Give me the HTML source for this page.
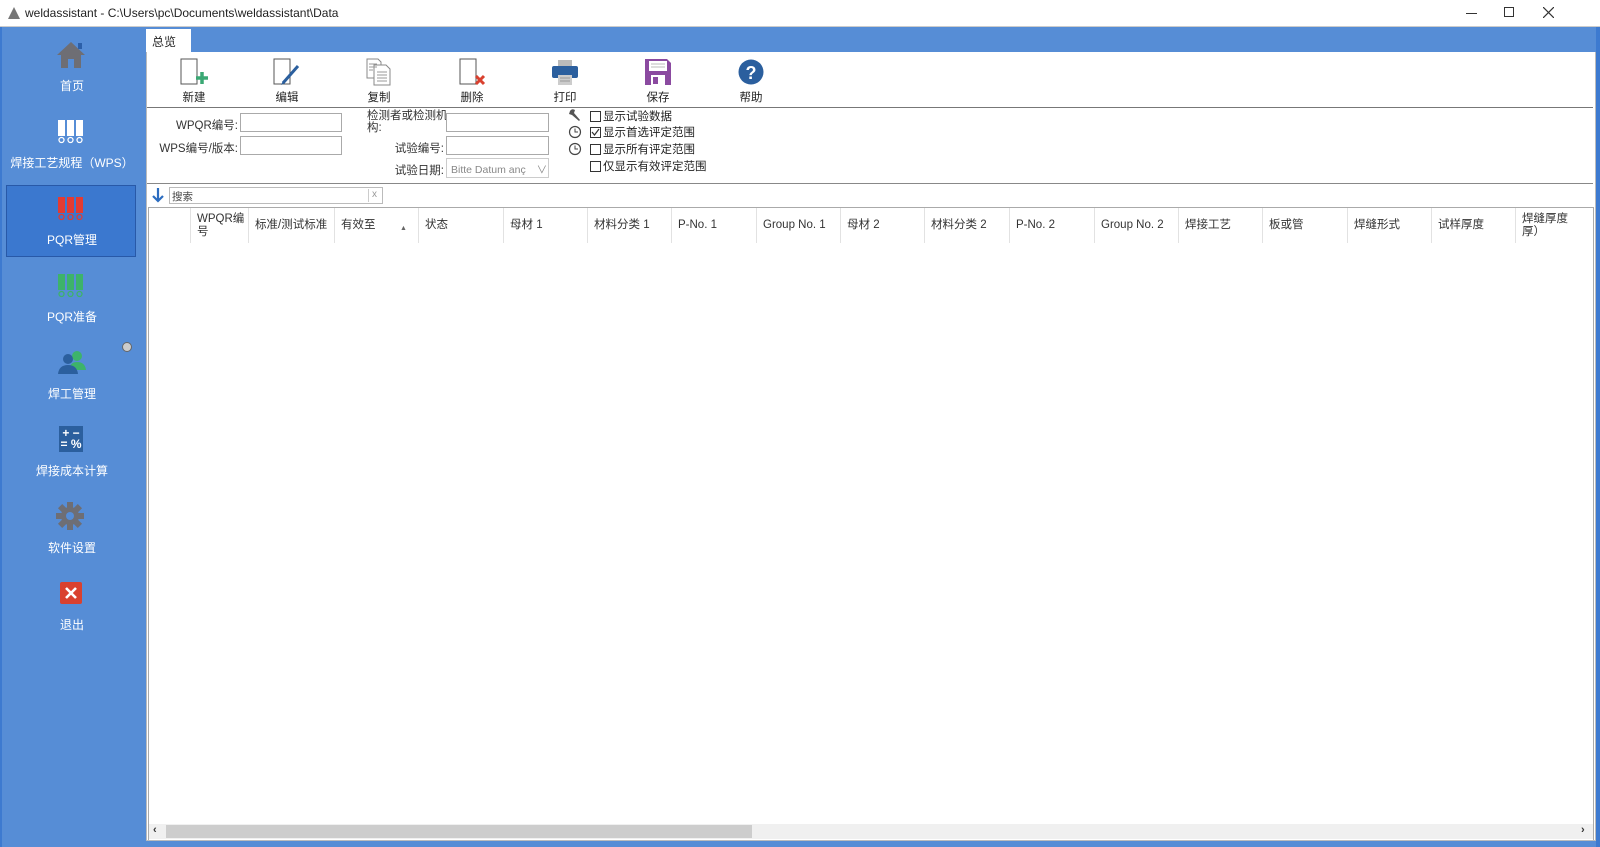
<!DOCTYPE html>
<html><head><meta charset="utf-8">
<style>
*{margin:0;padding:0;box-sizing:border-box}
body{width:1600px;height:847px;overflow:hidden;background:#568dd6;font-family:"Liberation Sans","Noto Sans CJK SC",sans-serif;font-size:12px;color:#222;position:relative}
.a{position:absolute}
#title{left:0;top:0;width:1600px;height:27px;background:#fff;border-bottom:1px solid #ccc}
#title .t{left:25px;top:6px;font-size:12px;color:#222}
.side{color:#fff;font-size:12px;text-align:center;width:144px;left:0}
.inp{background:#fff;border:1px solid #aaa;height:19px}
.lbl{font-size:11.5px;color:#333;text-align:right}
.tb{font-size:11.5px;color:#222;text-align:center;width:60px}
.cb{width:11px;height:11px;border:1px solid #333;background:#fff}
.th{top:208px;height:35px;border-left:1px solid #e2e2e2;font-size:11.5px;color:#333;padding:5px 0 0 6px;line-height:13px}
</style></head><body>
<div id="title" class="a">
 <svg class="a" style="left:8px;top:7px" width="12" height="12"><polygon points="6,0 12,12 0,12" fill="#777"/></svg>
 <div class="a t">weldassistant - C:\Users\pc\Documents\weldassistant\Data</div>
 <div class="a" style="left:1466px;top:13px;width:11px;height:1px;background:#333"></div>
 <div class="a" style="left:1504px;top:7px;width:10px;height:10px;border:1px solid #333"></div>
 <svg class="a" style="left:1543px;top:7px" width="11" height="11"><path d="M0 0L11 11M11 0L0 11" stroke="#333" stroke-width="1.2"/></svg>
</div>
<div class="a" style="left:0;top:27px;width:2px;height:820px;background:#3d7ad0"></div>
<div class="a" style="left:1596px;top:27px;width:4px;height:820px;background:#3d7ad0"></div>

<!-- sidebar -->
<svg class="a" style="left:56px;top:40px" width="30" height="30"><polygon points="15,2 29,15 25,15 25,28 18,28 18,19 12,19 12,28 5,28 5,15 1,15" fill="#6e6e74"/><rect x="22" y="3" width="4" height="6" fill="#2c5fa8"/></svg>
<div class="a side" style="top:77px">首页</div>
<svg class="a" style="left:57px;top:120px" width="28" height="24"><g fill="#fff"><rect x="1" y="0" width="7" height="16"/><rect x="10" y="0" width="7" height="16"/><rect x="19" y="0" width="7" height="16"/></g><g fill="none" stroke="#fff" stroke-width="1.3"><circle cx="4.5" cy="20" r="2.5"/><circle cx="13.5" cy="20" r="2.5"/><circle cx="22.5" cy="20" r="2.5"/></g></svg>
<div class="a side" style="top:154px">焊接工艺规程（WPS）</div>
<div class="a" style="left:6px;top:185px;width:130px;height:72px;background:#3b78cf;border:1px solid #2859a8"></div>
<svg class="a" style="left:57px;top:197px" width="28" height="24"><g fill="#e23b33"><rect x="1" y="0" width="7" height="16"/><rect x="10" y="0" width="7" height="16"/><rect x="19" y="0" width="7" height="16"/></g><g fill="none" stroke="#e23b33" stroke-width="1.3"><circle cx="4.5" cy="20" r="2.5"/><circle cx="13.5" cy="20" r="2.5"/><circle cx="22.5" cy="20" r="2.5"/></g></svg>
<div class="a side" style="top:231px">PQR管理</div>
<svg class="a" style="left:57px;top:274px" width="28" height="24"><g fill="#3db36a"><rect x="1" y="0" width="7" height="16"/><rect x="10" y="0" width="7" height="16"/><rect x="19" y="0" width="7" height="16"/></g><g fill="none" stroke="#3db36a" stroke-width="1.3"><circle cx="4.5" cy="20" r="2.5"/><circle cx="13.5" cy="20" r="2.5"/><circle cx="22.5" cy="20" r="2.5"/></g></svg>
<div class="a side" style="top:308px">PQR准备</div>
<div class="a" style="left:122px;top:342px;width:10px;height:10px;border-radius:50%;background:#ccc;border:1px solid #666"></div>
<svg class="a" style="left:57px;top:350px" width="30" height="24"><circle cx="20" cy="6" r="5" fill="#3db36a"/><path d="M12 20 Q13 12 20 12 Q28 12 29 20Z" fill="#3db36a"/><circle cx="11" cy="9" r="5" fill="#2b5f9e"/><path d="M1 24 Q2 15 11 15 Q20 15 21 24Z" fill="#2b5f9e"/></svg>
<div class="a side" style="top:385px">焊工管理</div>
<div class="a" style="left:59px;top:426px;width:24px;height:26px;background:#2b5f9e;color:#fff;font-size:12px;font-weight:bold;line-height:11px;text-align:center;padding-top:2px">+ −<br>= %</div>
<div class="a side" style="top:462px">焊接成本计算</div>
<svg class="a" style="left:56px;top:502px" width="28" height="28" viewBox="0 0 28 28"><g fill="#6e6e74"><circle cx="14" cy="14" r="9"/><g id="t"><rect x="11" y="0" width="6" height="28"/></g><rect x="11" y="0" width="6" height="28" transform="rotate(45 14 14)"/><rect x="11" y="0" width="6" height="28" transform="rotate(90 14 14)"/><rect x="11" y="0" width="6" height="28" transform="rotate(135 14 14)"/></g><circle cx="14" cy="14" r="4" fill="#568dd6"/></svg>
<div class="a side" style="top:539px">软件设置</div>
<div class="a" style="left:60px;top:582px;width:22px;height:22px;background:#d9412f;border-radius:2px"></div>
<svg class="a" style="left:65px;top:587px" width="12" height="12"><path d="M1 1L11 11M11 1L1 11" stroke="#fff" stroke-width="2.6"/></svg>
<div class="a side" style="top:616px">退出</div>

<!-- tab -->
<div class="a" style="left:146px;top:29px;width:45px;height:24px;background:#fff"></div>
<div class="a" style="left:152px;top:33px;font-size:12px">总览</div>
<!-- content -->
<div class="a" style="left:146px;top:52px;width:1450px;height:789px;background:#fff;border:1px solid #bbb;border-top:none"></div>

<!-- toolbar -->
<svg class="a" style="left:180px;top:58px" width="30" height="28"><path d="M1 1H17V26H1Z" fill="#fff" stroke="#555"/><path d="M22 14V26M16 20H28" stroke="#3aa874" stroke-width="3.5"/></svg>
<div class="a tb" style="left:164px;top:89px">新建</div>
<svg class="a" style="left:273px;top:58px" width="30" height="28"><path d="M1 1H17V26H1Z" fill="#fff" stroke="#555"/><path d="M10 25L25 8" stroke="#2b5f9e" stroke-width="3"/><path d="M8 27L10 23L12 25Z" fill="#2b5f9e"/></svg>
<div class="a tb" style="left:257px;top:89px">编辑</div>
<svg class="a" style="left:366px;top:58px" width="26" height="28"><path d="M1 1H12L15 4V20H1Z" fill="#fff" stroke="#888"/><path d="M8 7H20L24 11V27H8Z" fill="#fff" stroke="#888"/><path d="M3 6H11M3 9H11M3 12H7M11 14H21M11 17H21M11 20H21M11 23H21" stroke="#999"/></svg>
<div class="a tb" style="left:349px;top:89px">复制</div>
<svg class="a" style="left:459px;top:58px" width="28" height="28"><path d="M1 1H17V26H1Z" fill="#fff" stroke="#555"/><path d="M17 18L25 26M25 18L17 26" stroke="#d9412f" stroke-width="3"/></svg>
<div class="a tb" style="left:442px;top:89px">删除</div>
<svg class="a" style="left:551px;top:60px" width="28" height="26"><rect x="7" y="0" width="14" height="6" fill="#bbb"/><rect x="1" y="6" width="26" height="12" rx="2" fill="#2b5f9e"/><rect x="7" y="15" width="14" height="10" fill="#ccc"/><path d="M9 18H19M9 21H19" stroke="#999"/></svg>
<div class="a tb" style="left:535px;top:89px">打印</div>
<svg class="a" style="left:645px;top:59px" width="26" height="26"><path d="M0 0H22L26 4V26H0Z" fill="#8b4aa0"/><rect x="4" y="2" width="18" height="10" fill="#fff"/><path d="M6 5H20M6 8H20" stroke="#bbb"/><rect x="6" y="16" width="14" height="10" fill="#fff"/><rect x="8" y="18" width="5" height="7" fill="#8b4aa0"/></svg>
<div class="a tb" style="left:628px;top:89px">保存</div>
<svg class="a" style="left:738px;top:59px" width="26" height="26"><circle cx="13" cy="13" r="12.5" fill="#2b5f9e"/><text x="13" y="20" text-anchor="middle" font-family="Liberation Sans" font-weight="bold" font-size="18" fill="#fff">?</text></svg>
<div class="a tb" style="left:721px;top:89px">帮助</div>
<div class="a" style="left:147px;top:107px;width:1446px;height:1px;background:#777"></div>

<!-- filters -->
<div class="a lbl" style="left:150px;top:117px;width:88px">WPQR编号:</div>
<div class="a inp" style="left:240px;top:113px;width:102px"></div>
<div class="a lbl" style="left:150px;top:140px;width:88px">WPS编号/版本:</div>
<div class="a inp" style="left:240px;top:136px;width:102px"></div>
<div class="a" style="left:367px;top:110px;font-size:11.5px;color:#333;line-height:12px">检测者或检测机<br>构:</div>
<div class="a inp" style="left:446px;top:113px;width:103px"></div>
<div class="a lbl" style="left:360px;top:140px;width:84px">试验编号:</div>
<div class="a inp" style="left:446px;top:136px;width:103px"></div>
<div class="a lbl" style="left:360px;top:162px;width:84px">试验日期:</div>
<div class="a" style="left:446px;top:158px;width:103px;height:20px;border:1px solid #ccc;background:#fff;font-size:10.5px;color:#888;padding:3px 0 0 4px">Bitte Datum anç <span style="margin-left:8px">∨</span></div>
<svg class="a" style="left:568px;top:108px" width="14" height="14"><path d="M2 3 Q4 0 7 2 L6 5 L12 12 L11 13 L4 7 L1 6Z" fill="#555"/></svg>
<svg class="a" style="left:568px;top:125px" width="14" height="14"><circle cx="7" cy="7" r="5.5" fill="#fff" stroke="#444" stroke-width="1.2"/><path d="M7 3.5V7H10" stroke="#444" fill="none"/></svg>
<svg class="a" style="left:568px;top:142px" width="14" height="14"><circle cx="7" cy="7" r="5.5" fill="#fff" stroke="#444" stroke-width="1.2"/><path d="M7 3.5V7H10" stroke="#444" fill="none"/></svg>
<div class="a cb" style="left:590px;top:111px"></div><div class="a" style="left:603px;top:108px;font-size:11.5px">显示试验数据</div>
<div class="a cb" style="left:590px;top:127px"></div><svg class="a" style="left:591px;top:128px" width="9" height="9"><path d="M1 4L3.5 7L8 1" stroke="#333" fill="none" stroke-width="1.2"/></svg><div class="a" style="left:603px;top:124px;font-size:11.5px">显示首选评定范围</div>
<div class="a cb" style="left:590px;top:144px"></div><div class="a" style="left:603px;top:141px;font-size:11.5px">显示所有评定范围</div>
<div class="a cb" style="left:590px;top:161px"></div><div class="a" style="left:603px;top:158px;font-size:11.5px">仅显示有效评定范围</div>
<div class="a" style="left:147px;top:183px;width:1446px;height:1px;background:#888"></div>

<!-- search -->
<svg class="a" style="left:151px;top:187px" width="14" height="16"><path d="M7 1V14M2 9L7 14L12 9" stroke="#2b6cc0" stroke-width="2.2" fill="none"/></svg>
<div class="a" style="left:169px;top:187px;width:214px;height:17px;border:1px solid #bbb;background:#fff"></div>
<div class="a" style="left:172px;top:189px;font-size:10.5px;color:#444">搜索</div>
<div class="a" style="left:368px;top:189px;width:1px;height:13px;background:#ccc"></div>
<div class="a" style="left:372px;top:189px;font-size:10px;color:#999">x</div>

<!-- table -->
<div class="a" style="left:148px;top:207px;width:1446px;height:633px;border:1px solid #aaa;border-bottom:none"></div>
<div class="a th" style="left:190px;width:58px">WPQR编<br>号</div>
<div class="a th" style="left:248px;width:86px;padding-top:11px">标准/测试标准</div>
<div class="a th" style="left:334px;width:84px;padding-top:11px">有效至<span style="position:absolute;left:65px;font-size:7px;color:#666;top:14px">▲</span></div>
<div class="a th" style="left:418px;width:85px;padding-top:11px">状态</div>
<div class="a th" style="left:503px;width:84px;padding-top:11px">母材 1</div>
<div class="a th" style="left:587px;width:84px;padding-top:11px">材料分类 1</div>
<div class="a th" style="left:671px;width:85px;padding-top:11px">P-No. 1</div>
<div class="a th" style="left:756px;width:84px;padding-top:11px">Group No. 1</div>
<div class="a th" style="left:840px;width:84px;padding-top:11px">母材 2</div>
<div class="a th" style="left:924px;width:85px;padding-top:11px">材料分类 2</div>
<div class="a th" style="left:1009px;width:85px;padding-top:11px">P-No. 2</div>
<div class="a th" style="left:1094px;width:84px;padding-top:11px">Group No. 2</div>
<div class="a th" style="left:1178px;width:84px;padding-top:11px">焊接工艺</div>
<div class="a th" style="left:1262px;width:85px;padding-top:11px">板或管</div>
<div class="a th" style="left:1347px;width:84px;padding-top:11px">焊缝形式</div>
<div class="a th" style="left:1431px;width:84px;padding-top:11px">试样厚度</div>
<div class="a th" style="left:1515px;width:78px;overflow:hidden;white-space:nowrap">焊缝厚度<br>厚）</div>

<!-- scrollbar -->
<div class="a" style="left:149px;top:824px;width:1444px;height:15px;background:#f0f0f0"></div>
<div class="a" style="left:166px;top:825px;width:586px;height:13px;background:#cdcdcd"></div>
<div class="a" style="left:153px;top:824px;font-size:11px;color:#333;font-weight:bold">‹</div>
<div class="a" style="left:1581px;top:824px;font-size:11px;color:#333;font-weight:bold">›</div>
</body></html>
